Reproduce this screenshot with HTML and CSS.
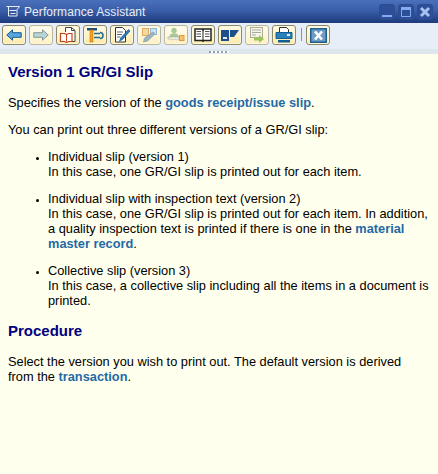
FILE: index.html
```html
<!DOCTYPE html>
<html lang="en">
<head>
<meta charset="utf-8"/>
<title>Performance Assistant</title>
<link rel="stylesheet" href="styles.css">
</head>
<body>
<div class="titlebar">
    <svg class="title-icon" width="14" height="11" viewBox="0 0 14 11">
        <path d="M.5.500h13l-3 4h-7M2.500.500v9.500h8.500v-5.500" fill="none" stroke="#e6ecf8" stroke-width="1"/>
        <path d="M4.500 7.500h5" stroke="#e6ecf8" stroke-width="1"/>
    </svg>
    <span class="title-text">Performance Assistant</span>
    <div class="win-buttons">
        <div class="win-btn"><svg width="14" height="14" viewBox="0 0 14 14"><rect x="2" y="10" width="10" height="2" fill="#86aaf0"/></svg></div>
        <div class="win-btn"><svg width="14" height="14" viewBox="0 0 14 14"><path d="M2.500 2.500h9v9h-9z" fill="none" stroke="#86aaf0"/><rect x="2" y="2" width="10" height="3" fill="#86aaf0"/></svg></div>
        <div class="win-btn"><svg width="14" height="14" viewBox="0 0 14 14"><path d="M3 3l8 8M11 3l-8 8" stroke="#a9c2f2" stroke-width="3"/></svg></div>
    </div>
</div>

<div class="toolbar">
    <div class="tool">
        <svg width="16" height="12" viewBox="0 0 16 12"><path d="M.8 6L6.500.8v2.900h8.700v4.600h-8.700v2.900z" fill="#5aa6dc" stroke="#0f5f94"/></svg>
    </div>
    <div class="tool off">
        <svg width="16" height="12" viewBox="0 0 16 12"><path d="M15.200 6L9.500.8v2.900h-8.700v4.600h8.700v2.900z" fill="#b9d6d4" stroke="#7d9a9c"/></svg>
    </div>
    <div class="tool">
        <svg width="18" height="16" viewBox="0 0 18 16"><path d="M6.500 5V.5h6l3.500 3v11h-4" fill="#fff" stroke="#444"/><path d="M12.500.5v3h3.500" fill="none" stroke="#444"/><path d="M1.500 6.500h4l2 1 2-1h3.500v8h-3.500l-2 1-2-1h-4z" fill="#fff" stroke="#c8401c" stroke-width="1.200"/><path d="M7.500 7.500v7" stroke="#c8401c"/></svg>
    </div>
    <div class="tool">
        <svg width="18" height="16" viewBox="0 0 18 16"><path d="M1 1h10v2.500h-10z" fill="#1c4f7c"/><rect x="4" y="3" width="3" height="12" fill="#f4a11c" stroke="#b76a10" stroke-width=".5"/><path d="M8 6.500h6M8 10.500h6" stroke="#1c6a9c" stroke-width="1.500"/><path d="M14 5.500a3 3 0 1 1 0 6" fill="none" stroke="#1c6a9c" stroke-width="1.500"/></svg>
    </div>
    <div class="tool">
        <svg width="18" height="16" viewBox="0 0 18 16"><path d="M2.500.5h7l3 3v11.500h-10z" fill="#fff" stroke="#333"/><path d="M4 5h6M4 7.500h5M4 10h3.500" stroke="#666"/><path d="M15.500 2.500l1.500 1.500-7.500 8.500-3 1.500 1.200-3z" fill="#2c78b8" stroke="#0f4f84" stroke-width=".6"/></svg>
    </div>
    <div class="tool off">
        <svg width="18" height="16" viewBox="0 0 18 16"><rect x="2.500" y="1.500" width="6" height="7" fill="#f6d89a" stroke="#e0a860"/><rect x="10.500" y="1.500" width="6" height="6" fill="#cfe0ea" stroke="#8fb8d0"/><path d="M13 5l2 2-7.500 7-4 1 1-4z" fill="#9db4c0" stroke="#8098a6" stroke-width=".6"/></svg>
    </div>
    <div class="tool off">
        <svg width="18" height="16" viewBox="0 0 18 16"><circle cx="7" cy="3.500" r="2.700" fill="#a8c898"/><path d="M2.500 10c0-3 2-3.800 4.500-3.800s4.500.8 4.500 3.800z" fill="#a8c898"/><path d="M1 10h11v2l-2 1-2-1-2 1-2-1-3 0z" fill="#f4f4ec" stroke="#a0a890" stroke-width=".6"/><rect x="12.500" y="8.500" width="4.500" height="5" fill="#f6c070" stroke="#e09a40"/></svg>
    </div>
    <div class="tool">
        <svg width="18" height="14" viewBox="0 0 18 14"><path d="M1 1h7.500l.5 1 .5-1h7.500v11.500h-7.500l-.5 1-.5-1h-7.500z" fill="#fff" stroke="#222" stroke-width="1.500"/><path d="M9 1.500v11" stroke="#222"/><path d="M2.500 3.500h4.500M2.500 6h4.500M2.500 8.500h4.500M11 3.500h4.500M11 6h4.500M11 8.500h4.500" stroke="#555" stroke-width="1.100"/></svg>
    </div>
    <div class="tool">
        <svg width="18" height="11" viewBox="0 0 18 11"><path d="M0 0h8v11h-8z" fill="#1c4f8c"/><path d="M9 0h9l-5 7h-4z" fill="#1c4f8c"/><rect x="2" y="7" width="4" height="2" fill="#dfe8f4"/></svg>
    </div>
    <div class="tool off">
        <svg width="18" height="16" viewBox="0 0 18 16"><rect x="2.500" y=".5" width="12" height="10" fill="#f4f4e8" stroke="#a8ac98"/><path d="M4 3h9M4 5.500h9M4 8h4" stroke="#a8ac98"/><path d="M6 10.500h5V8l5 4-5 4v-2.500H6z" fill="#9cc458"/></svg>
    </div>
    <div class="tool">
        <svg width="18" height="16" viewBox="0 0 18 16"><path d="M4.500 5V.5h7l2 2V5" fill="#fff" stroke="#333"/><path d="M1 5.500h16v6H1z" fill="#2c80b8" stroke="#0f5f94"/><rect x="12" y="7" width="3" height="2" fill="#dfeaf4"/><rect x="3" y="13" width="12" height="2.500" fill="#0f5f94"/></svg>
    </div>
    <div class="tool-sep"></div>
    <div class="tool">
        <svg width="17" height="15" viewBox="0 0 17 15"><rect x=".75" y=".75" width="15.500" height="13.500" fill="#6f9cc4" stroke="#1f5f8c" stroke-width="1.500"/><path d="M5 3.500l7 8M12 3.500l-7 8" stroke="#fff" stroke-width="2.600"/></svg>
    </div>
</div>

<div class="sash"><span class="sash-dots"></span></div>

<div class="content">
    <h1>Version 1 GR/GI Slip</h1>
    <p>Specifies the version of the <a href="#">goods receipt/issue slip</a>.</p>
    <p>You can print out three different versions of a GR/GI slip:</p>
    <ul>
        <li>Individual slip (version 1)<br>In this case, one GR/GI slip is printed out for each item.</li>
        <li>Individual slip with inspection text (version 2)<br>In this case, one GR/GI slip is printed out for each item. In addition, a quality inspection text is printed if there is one in the <a href="#">material master record</a>.</li>
        <li>Collective slip (version 3)<br>In this case, a collective slip including all the items in a document is printed.</li>
    </ul>
    <h2>Procedure</h2>
    <p>Select the version you wish to print out. The default version is derived from the <a href="#">transaction</a>.</p>
</div>
</body>
</html>
```

FILE: styles.css
```css
html, body {
    margin: 0;
    height: 100%;
    overflow: hidden;
}
body {
    display: flex;
    flex-direction: column;
    background: #ffffee;
    font-family: "Liberation Sans", Arial, sans-serif;
    font-size: 12.8px;
    color: #000;
}
.titlebar {
    display: flex;
    align-items: center;
    height: 23px;
    flex: none;
    padding: 0 5px 0 6px;
    background: linear-gradient(#4a70bc, #3a5ea8 45%, #1c3a7c);
}
.title-icon {
    margin-right: 4px;
}
.title-text {
    color: #e8eef8;
    font-size: 12px;
    letter-spacing: .07px;
}
.win-buttons {
    display: flex;
    gap: 3px;
    margin-left: auto;
}
.win-btn {
    display: flex;
    width: 16px;
    height: 16px;
    box-sizing: border-box;
    align-items: center;
    justify-content: center;
    border: 1px solid #2c4c90;
    border-radius: 3px;
    background: #2d4f98;
}
.toolbar {
    display: flex;
    align-items: flex-start;
    gap: 3px;
    height: 26px;
    flex: none;
    padding: 2px 0 0 2px;
    box-sizing: border-box;
    background: #e8eef7;
}
.tool {
    display: flex;
    width: 24px;
    height: 20px;
    box-sizing: border-box;
    align-items: center;
    justify-content: center;
    border: 1px solid #8c8a6e;
    border-radius: 3px;
    background: linear-gradient(#fffbe6, #fde9a8);
    box-shadow: inset 0 0 0 1px #fff8d8;
}
.tool.off {
    border-color: #b8b6a0;
    background: linear-gradient(#fffdf0, #fdf0c4);
}
.tool-sep {
    width: 1px;
    height: 13px;
    margin: 3px 1px 0 2px;
    background: #8a94a4;
}
.sash {
    display: flex;
    justify-content: center;
    align-items: center;
    height: 5px;
    flex: none;
    background: #dde6ec;
}
.sash-dots {
    width: 20px;
    height: 2px;
    background: repeating-linear-gradient(90deg, #8fa0b0 0 2px, #fff 2px 4px);
}
.content {
    flex: 1;
    padding: 9px 8px 0;
    line-height: 15px;
}
h1, h2 {
    margin: 0;
    color: #000080;
    font-size: 15px;
    line-height: 18px;
    font-weight: bold;
}
p {
    margin: 12px 0 0;
}
h1 + p, h2 + p {
    margin-top: 14px;
}
a {
    color: #1f6aa5;
    font-weight: bold;
    text-decoration: none;
}
ul {
    margin: 12.3px 0 0;
    padding-left: 40px;
}
li {
    margin-bottom: 12px;
}
li::marker {
    font-size: 9px;
}
h2 {
    margin-top: 14px;
}
```
